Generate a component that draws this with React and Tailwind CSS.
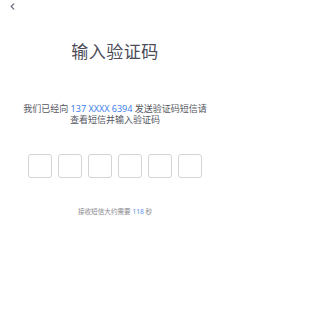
export default function App() {
  const boxes = [0, 1, 2, 3, 4, 5];

  return (
    <div
      className="w-[230px] min-h-[323px] bg-white flex flex-col"
      style={{ fontFamily: '"Noto Sans", "Noto Sans CJK SC", sans-serif' }}
    >
      <div className="h-[12px] pl-[10px] pt-[3px]">
        <svg width="5" height="7" viewBox="0 0 5 7" fill="none">
          <path d="M3.8 0.8 L1.2 3.5 L3.8 6.2" stroke="#6b6b80" strokeWidth="1.2" strokeLinecap="round" strokeLinejoin="round" />
        </svg>
      </div>

      <h1 className="mt-[30px] text-center text-[17px] leading-[20px] text-[#4a4b57] tracking-[0.5px]">
        输入验证码
      </h1>

      <div className="mt-[41px] flex flex-col items-center text-[9px] leading-[11px] text-[#55565f]">
        <p>
          我们已经向 <span className="text-[#3f7fe8]">137 XXXX 6394</span> 发送验证码短信请
        </p>
        <p>查看短信并输入验证码</p>
      </div>

      <div className="mt-[29px] flex justify-center gap-[6px]">
        {boxes.map((b) => (
          <div key={b} className="w-[24px] h-[24px] rounded-[3px] border border-[#d4d4d8] bg-white" />
        ))}
      </div>

      <p className="mt-[30px] text-center text-[6.6px] leading-[8px] text-[#8a8a90]">
        接收短信大约需要 <span className="text-[#5b8ff0]">118</span> 秒
      </p>
    </div>
  );
}
